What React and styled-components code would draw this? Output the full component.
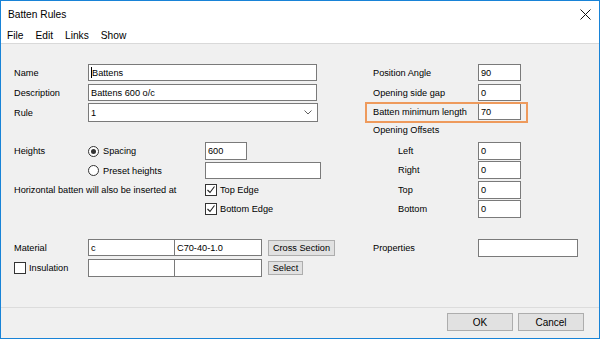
import React from "react";
import styled, { createGlobalStyle } from "styled-components";

const Global = createGlobalStyle`
  html, body { margin: 0; padding: 0; background: #ffffff; }
  * { box-sizing: border-box; }
`;

const UI_FONT = `"Liberation Sans", Arial, sans-serif`;

const Window = styled.div`
  width: 600px;
  height: 339px;
  border: 1px solid #1883d7;
  display: flex;
  flex-direction: column;
  font-family: ${UI_FONT};
  font-size: 9.2px;
  color: #000;
  background: #f0f0f0;
  overflow: hidden;
`;

const TitleBar = styled.div`
  height: 26px;
  background: #fff;
  display: flex;
  align-items: center;
  justify-content: space-between;
  padding: 0 8px 0 7px;
  font-size: 10.2px;
`;

const CloseIcon = () => (
  <svg width="11" height="11" viewBox="0 0 11 11">
    <path d="M0.5 0.5 L10.5 10.5 M10.5 0.5 L0.5 10.5" stroke="#111" strokeWidth="1" />
  </svg>
);

const MenuBar = styled.div`
  height: 17px;
  background: #fff;
  display: flex;
  align-items: center;
  font-size: 10.2px;
  border-bottom: 1px solid #d9d9d9;
`;

const MenuItem = styled.span`
  padding: 0 6px;
`;

const Body = styled.div`
  flex: 1;
  display: grid;
  grid-template-columns: 359px 1fr;
  padding: 20px 0 0 13px;
`;

const Column = styled.div`
  display: flex;
  flex-direction: column;
`;

const Row = styled.div`
  position: relative;
  display: flex;
  align-items: center;
  height: ${(p) => p.$h || 17}px;
  margin-top: ${(p) => p.$mt || 0}px;
`;

const Label = styled.div`
  width: ${(p) => p.$w || 74}px;
  padding-left: ${(p) => p.$indent || 0}px;
  flex-shrink: 0;
  white-space: nowrap;
`;

const Field = styled.div`
  width: ${(p) => p.$w}px;
  height: ${(p) => p.$h || 17}px;
  margin-left: ${(p) => p.$ml || 0}px;
  background: #fff;
  border: 1px solid #7a7a7a;
  display: flex;
  align-items: center;
  padding-left: 2px;
  white-space: nowrap;
  flex-shrink: 0;
`;

const Caret = styled.span`
  display: inline-block;
  width: 1px;
  height: 11px;
  background: #000;
`;

const Select = styled(Field)`
  justify-content: space-between;
  padding-right: 5px;
`;

const Chevron = () => (
  <svg width="8" height="5" viewBox="0 0 8 5">
    <path d="M0.5 0.5 L4 4 L7.5 0.5" fill="none" stroke="#606060" strokeWidth="1" />
  </svg>
);

const Choices = styled.div`
  width: 117px;
  display: flex;
  align-items: center;
  gap: 4px;
  flex-shrink: 0;
`;

const RadioCircle = styled.span`
  width: 11px;
  height: 11px;
  border: 1px solid #333;
  border-radius: 50%;
  background: #fff;
  display: flex;
  align-items: center;
  justify-content: center;
  &::after {
    content: "";
    width: 5px;
    height: 5px;
    border-radius: 50%;
    background: ${(p) => (p.$on ? "#333" : "transparent")};
  }
`;

const Check = styled.label`
  display: flex;
  align-items: center;
  gap: 3px;
`;

const Box = styled.span`
  width: 12px;
  height: 12px;
  border: 1px solid #333;
  background: #fff;
  display: flex;
  align-items: center;
  justify-content: center;
`;

const Tick = () => (
  <svg width="10" height="10" viewBox="0 0 10 10">
    <path d="M1.5 5 L4 7.5 L8.5 1.5" fill="none" stroke="#222" strokeWidth="1.1" />
  </svg>
);

const CheckBox = ({ on, children }) => (
  <Check>
    <Box>{on && <Tick />}</Box>
    {children}
  </Check>
);

const Button = styled.div`
  width: ${(p) => p.$w}px;
  height: ${(p) => p.$h || 17}px;
  margin-left: ${(p) => p.$ml || 0}px;
  background: #e1e1e1;
  border: 1px solid #adadad;
  display: flex;
  align-items: center;
  justify-content: center;
  font-size: ${(p) => p.$fs || 9.2}px;
  white-space: nowrap;
`;

const Highlight = styled.div`
  position: absolute;
  left: -8px;
  top: -1px;
  width: 163px;
  height: 21px;
  border: 2px solid #ee9a5c;
  pointer-events: none;
`;

const Footer = styled.div`
  height: 31px;
  border-top: 1px solid #dcdcdc;
  display: flex;
  justify-content: flex-end;
  align-items: flex-start;
  gap: 5px;
  padding: 5px 15px 0 0;
`;

const OffsetRow = ({ label, mt }) => (
  <Row $h={18} $mt={mt}>
    <Label $w={105} $indent={25}>{label}</Label>
    <Field $w={43} $h={18}>0</Field>
  </Row>
);

export default function App() {
  return (
    <Window>
      <Global />
      <TitleBar>
        <span>Batten Rules</span>
        <CloseIcon />
      </TitleBar>
      <MenuBar>
        <MenuItem>File</MenuItem>
        <MenuItem>Edit</MenuItem>
        <MenuItem>Links</MenuItem>
        <MenuItem>Show</MenuItem>
      </MenuBar>
      <Body>
        <Column>
          <Row>
            <Label>Name</Label>
            <Field $w={229}>
              <Caret />
              Battens
            </Field>
          </Row>
          <Row $mt={3}>
            <Label>Description</Label>
            <Field $w={229}>Battens 600 o/c</Field>
          </Row>
          <Row $h={19} $mt={2}>
            <Label>Rule</Label>
            <Select $w={230} $h={19}>
              1
              <Chevron />
            </Select>
          </Row>
          <Row $h={18} $mt={20}>
            <Label>Heights</Label>
            <Choices>
              <RadioCircle $on />
              Spacing
            </Choices>
            <Field $w={42} $h={18}>600</Field>
          </Row>
          <Row $mt={2}>
            <Label />
            <Choices>
              <RadioCircle />
              Preset heights
            </Choices>
            <Field $w={116}></Field>
          </Row>
          <Row $h={14} $mt={4}>
            <Label $w={191}>Horizontal batten will also be inserted at</Label>
            <CheckBox on>Top Edge</CheckBox>
          </Row>
          <Row $h={14} $mt={5}>
            <Label $w={191} />
            <CheckBox on>Bottom Edge</CheckBox>
          </Row>
          <Row $mt={23}>
            <Label>Material</Label>
            <Field $w={87}>c</Field>
            <Field $w={88} $ml={-1}>C70-40-1.0</Field>
            <Button $w={67} $h={16} $ml={6}>Cross Section</Button>
          </Row>
          <Row $h={18} $mt={3}>
            <Label>
              <CheckBox>Insulation</CheckBox>
            </Label>
            <Field $w={87} $h={18}></Field>
            <Field $w={88} $h={18} $ml={-1}></Field>
            <Button $w={35} $h={14} $ml={6}>Select</Button>
          </Row>
        </Column>
        <Column>
          <Row>
            <Label $w={105}>Position Angle</Label>
            <Field $w={43}>90</Field>
          </Row>
          <Row $mt={3}>
            <Label $w={105}>Opening side gap</Label>
            <Field $w={43}>0</Field>
          </Row>
          <Row $mt={2}>
            <Label $w={105}>Batten minimum length</Label>
            <Field $w={43}>70</Field>
            <Highlight />
          </Row>
          <Row $h={14} $mt={3}>
            <Label $w={105}>Opening Offsets</Label>
          </Row>
          <OffsetRow label="Left" mt={5} />
          <OffsetRow label="Right" mt={1} />
          <OffsetRow label="Top" mt={2} />
          <OffsetRow label="Bottom" mt={1} />
          <Row $h={18} $mt={21}>
            <Label $w={105}>Properties</Label>
            <Field $w={100} $h={18}></Field>
          </Row>
        </Column>
      </Body>
      <Footer>
        <Button $w={66} $h={18} $fs={10}>OK</Button>
        <Button $w={66} $h={18} $fs={10}>Cancel</Button>
      </Footer>
    </Window>
  );
}
